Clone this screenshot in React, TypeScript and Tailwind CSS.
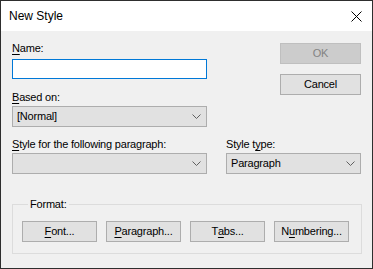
import React from "react";

function Key({ k }: { k: string }) {
  return <span className="underline underline-offset-2">{k}</span>;
}

function Chevron() {
  return (
    <svg width="9" height="5" viewBox="0 0 9 5" className="shrink-0">
      <path d="M0.5 0.5 L4.5 4.5 L8.5 0.5" fill="none" stroke="#606060" strokeWidth="1" />
    </svg>
  );
}

function Select({ value, w }: { value: string; w: string }) {
  return (
    <div
      className={`flex h-[21px] ${w} items-center justify-between border border-[#adadad] bg-[#e1e1e1] pl-[4px] pr-[5px]`}
    >
      <span>{value}</span>
      <Chevron />
    </div>
  );
}

function Btn({ children, disabled }: { children: React.ReactNode; disabled?: boolean }) {
  return (
    <button
      disabled={disabled}
      className={
        disabled
          ? "flex h-[21px] w-[81px] items-center justify-center border border-[#bfbfbf] bg-[#cccccc] text-[#838383]"
          : "flex h-[21px] w-[81px] items-center justify-center border border-[#adadad] bg-[#e1e1e1] text-black"
      }
    >
      {children}
    </button>
  );
}

function FmtBtn({ children }: { children: React.ReactNode }) {
  return (
    <button className="flex h-[21px] w-[75px] items-center justify-center border border-[#adadad] bg-[#e1e1e1]">
      {children}
    </button>
  );
}

export default function App() {
  return (
    <div
      className="h-[269px] w-[373px] border border-[#2e2e2e] bg-[#f0f0f0] text-[11px] leading-[15px] tracking-[-0.2px] text-black"
      style={{ fontFamily: '"Liberation Sans", Arial, sans-serif' }}
    >
      {/* title bar */}
      <div className="flex h-[30px] items-center justify-between bg-white pl-[8px] pr-[10px] text-[12px] tracking-normal">
        <span>New Style</span>
        <svg width="11" height="11" viewBox="0 0 11 11">
          <path d="M0.5 0.5 L10.5 10.5 M10.5 0.5 L0.5 10.5" stroke="#000" strokeWidth="1" />
        </svg>
      </div>

      <div className="px-[11px]">
        <div className="flex justify-between">
          <div className="w-[195px] pt-[10px]">
            <div>
              <Key k="N" />ame:
            </div>
            <div className="mt-[3px] h-[20px] border border-[#0078d7] bg-white" />
            <div className="mt-[11px]">
              <Key k="B" />ased on:
            </div>
            <div className="mt-[1px]">
              <Select value="[Normal]" w="w-[195px]" />
            </div>
          </div>
          <div className="flex flex-col gap-[10px] pt-[12px]">
            <Btn disabled>OK</Btn>
            <Btn>Cancel</Btn>
          </div>
        </div>

        <div className="mt-[10px] flex justify-between">
          <div className="w-[195px]">
            <div>
              <Key k="S" />tyle for the following paragraph:
            </div>
            <div className="mt-[1px]">
              <Select value="" w="w-[195px]" />
            </div>
          </div>
          <div className="w-[135px]">
            <div>
              Style t<Key k="y" />pe:
            </div>
            <div className="mt-[1px]">
              <Select value="Paragraph" w="w-[135px]" />
            </div>
          </div>
        </div>

        <fieldset className="mt-[23px] w-[350px] border border-[#dcdcdc] pb-[11px] pl-[9px]">
          <legend className="ml-[6px] px-[2px]">Format:</legend>
          <div className="mt-[9px] flex gap-[9px]">
            <FmtBtn>
              <Key k="F" />ont...
            </FmtBtn>
            <FmtBtn>
              <Key k="P" />aragraph...
            </FmtBtn>
            <FmtBtn>
              T<Key k="a" />bs...
            </FmtBtn>
            <FmtBtn>
              N<Key k="u" />mbering...
            </FmtBtn>
          </div>
        </fieldset>
      </div>
    </div>
  );
}
